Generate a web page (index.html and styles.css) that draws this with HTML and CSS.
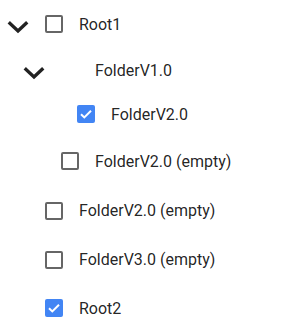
FILE: index.html
```html
<!DOCTYPE html>
<html lang="en">
<head>
<meta charset="utf-8">
<link rel="stylesheet" href="styles.css">
</head>
<body>
<ul class="tree">
  <li class="node h48">
    <span class="toggle"><svg viewBox="0 0 36 36" width="36" height="36"><polyline points="10,20.5 18,28 26,20.5" fill="none" stroke="#222" stroke-width="3.4" stroke-linecap="square"/></svg></span>
    <span class="check"><span class="box"></span></span>
    <span class="label">Root1</span>
  </li>
  <li class="node h44 lvl1">
    <span class="toggle"><svg viewBox="0 0 36 36" width="36" height="36"><polyline points="10,20.5 18,28 26,20.5" fill="none" stroke="#222" stroke-width="3.4" stroke-linecap="square"/></svg></span>
    <span class="check hidden"><span class="box"></span></span>
    <span class="label">FolderV1.0</span>
  </li>
  <li class="node h44 lvl2">
    <span class="toggle"></span>
    <span class="check"><span class="box checked"><svg viewBox="0 0 18 18" width="18" height="18"><polyline points="4,9.3 7.3,12.4 14,5.8" fill="none" stroke="#fff" stroke-width="2"/></svg></span></span>
    <span class="label">FolderV2.0</span>
  </li>
  <li class="node h50 lvl1">
    <span class="toggle"></span>
    <span class="check"><span class="box"></span></span>
    <span class="label">FolderV2.0 (empty)</span>
  </li>
  <li class="node h49">
    <span class="toggle"></span>
    <span class="check"><span class="box"></span></span>
    <span class="label">FolderV2.0 (empty)</span>
  </li>
  <li class="node h49">
    <span class="toggle"></span>
    <span class="check"><span class="box"></span></span>
    <span class="label">FolderV3.0 (empty)</span>
  </li>
  <li class="node h48">
    <span class="toggle"></span>
    <span class="check"><span class="box checked"><svg viewBox="0 0 18 18" width="18" height="18"><polyline points="4,9.3 7.3,12.4 14,5.8" fill="none" stroke="#fff" stroke-width="2"/></svg></span></span>
    <span class="label">Root2</span>
  </li>
</ul>
</body>
</html>
```
FILE: styles.css
```css
html, body {
  margin: 0;
  padding: 0;
  background: #fff;
}
body {
  font-family: Roboto, "Noto Sans", sans-serif;
  font-size: 16px;
  color: rgba(0, 0, 0, 0.87);
}
.tree {
  list-style: none;
  margin: 0;
  padding: 0;
}
.node {
  display: flex;
  align-items: center;
}
.h44 { height: 44px; }
.h48 { height: 48px; }
.h49 { height: 49px; }
.h50 { height: 50px; }
.lvl1 { padding-left: 16px; }
.lvl2 { padding-left: 32px; }
.toggle {
  width: 36px;
  height: 36px;
  flex: none;
  display: flex;
  align-items: center;
  justify-content: center;
}
.toggle svg { display: block; margin-top: -6px; }
.check {
  width: 36px;
  height: 36px;
  flex: none;
  display: flex;
  align-items: center;
  justify-content: center;
}
.check.hidden { visibility: hidden; }
.box {
  width: 18px;
  height: 18px;
  box-sizing: border-box;
  border: 2px solid rgba(0, 0, 0, 0.6);
  border-radius: 2px;
  position: relative;
}
.box.checked {
  border: none;
  background: #4285f4;
}
.box svg { display: block; }
.label {
  margin-left: 7px;
  white-space: nowrap;
}
```
